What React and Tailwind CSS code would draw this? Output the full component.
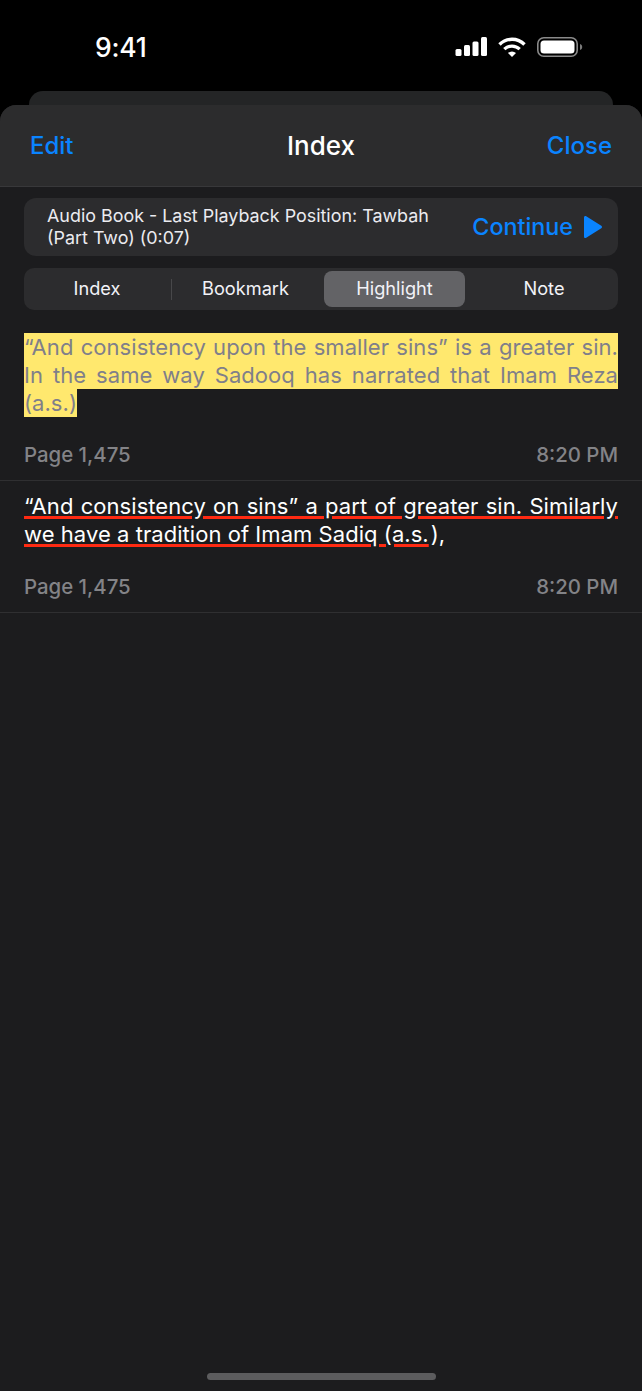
const font = { fontFamily: 'Inter, "Noto Sans", sans-serif' }

function StatusBar() {
  return (
    <div className="h-[91px] flex items-start justify-between pt-[33px] pl-[95px] pr-[59px]">
      <span className="text-white text-[26.500px] leading-[28px] font-medium tracking-[-0.2px]">9:41</span>
      <svg width="128" height="24" viewBox="0 0 128 24" className="mt-[2px]">
        <g fill="#fff">
          <rect x="0.500" y="14" width="6" height="7" rx="1.500" />
          <rect x="9" y="10" width="6" height="11" rx="1.500" />
          <rect x="17.500" y="6.500" width="6" height="14.500" rx="1.500" />
          <rect x="26" y="2" width="6" height="19" rx="1.500" />
        </g>
        <g fill="none" stroke="#fff" strokeLinecap="butt">
          <path d="M44.500 9.500a17.500 17.500 0 0 1 25 0" strokeWidth="3.400" />
          <path d="M49.300 14.200a11 11 0 0 1 15.400 0" strokeWidth="3.200" />
        </g>
        <path d="M53 18a6 6 0 0 1 8 0L57 22z" fill="#fff" />
        <rect x="82.800" y="2.800" width="39.400" height="18.400" rx="6" fill="none" stroke="#8a8a8a" strokeWidth="1.600" />
        <rect x="85.500" y="5.500" width="34" height="13" rx="3.500" fill="#fff" />
        <path d="M125 9c1.400.4 2.200 1.500 2.200 3s-.8 2.600-2.200 3z" fill="#7a7a7a" />
      </svg>
    </div>
  )
}

function Meta() {
  return (
    <div className="flex justify-between text-[20.400px] leading-[24px] font-medium text-[#838387]">
      <span>Page 1,475</span>
      <span>8:20 PM</span>
    </div>
  )
}

export default function App() {
  return (
    <div style={font} className="w-[642px] h-[1391px] bg-black overflow-hidden flex flex-col">
      <StatusBar />
      <div className="mx-[29px] h-[14px] shrink-0 bg-[#242526] rounded-t-[14px]" />

      <div className="flex-1 bg-[#1c1c1e] rounded-t-[16px] flex flex-col relative">
        <div className="h-[82px] bg-[#2c2c2d] rounded-t-[16px] border-b border-[#38383a] flex items-center px-[30px] shrink-0">
          <span className="flex-1 text-[#0a84ff] text-[24px] font-medium">Edit</span>
          <span className="text-white text-[26px] font-medium">Index</span>
          <span className="flex-1 text-right text-[#0a84ff] text-[24px] font-medium">Close</span>
        </div>

        <div className="px-[24px] pt-[11px]">
          <div className="h-[58px] bg-[#2c2c2e] rounded-[12px] flex items-center justify-between pl-[23px] pr-[16px]">
            <div className="w-[400px] text-[#ebebf0] text-[17.900px] leading-[22px]">
              Audio Book - Last Playback Position: Tawbah (Part Two) (0:07)
            </div>
            <div className="flex items-center gap-[11px]">
              <span className="text-[#0a84ff] text-[23.300px] font-medium">Continue</span>
              <svg width="18" height="24" viewBox="0 0 18 24">
                <path d="M0 2.500v19c0 1.300 1.100 2 2.200 1.300L17.300 13.200c.9-.6.900-1.800 0-2.400L2.200 1.200C1.100.5 0 1.200 0 2.500z" fill="#0a84ff" />
              </svg>
            </div>
          </div>

          <div className="mt-[12px] h-[42px] bg-[#2c2c2e] rounded-[10px] flex items-center px-[3px] text-[18.200px] text-[#f2f2f7]">
            <div className="w-[144px] pr-[4px] text-center">Index</div>
            <div className="w-px h-[21px] bg-[#48484a]" />
            <div className="w-[152px] pr-[5px] text-center">Bookmark</div>
            <div className="w-[141px] h-[36px] bg-[#636366] rounded-[8px] flex items-center justify-center">Highlight</div>
            <div className="flex-1 pl-[8px] text-center">Note</div>
          </div>
        </div>

        <div className="px-[24px] pt-[23px] pb-[13px] border-b border-[#2f2f31]">
          <p className="text-[22px] leading-[28px] text-justify text-[#7f7f8a] tracking-[0.05px]">
            <span className="bg-[#ffe86e] py-[1px]">
              “And consistency upon the smaller sins” is a greater sin. In the same way Sadooq has narrated that Imam Reza (a.s.)
            </span>
          </p>
          <div className="mt-[26px]">
            <Meta />
          </div>
        </div>

        <div className="px-[24px] pt-[11px] pb-[13px] border-b border-[#2f2f31]">
          <p className="text-[22px] leading-[28px] text-justify text-white tracking-[0.05px]">
            <span className="underline decoration-[#ff2a12] decoration-[3px] underline-offset-[2px]">
              “And consistency on sins” a part of greater sin. Similarly we have a tradition of Imam Sadiq (a.s.
            </span>
            <span className="ml-[2px]">),</span>
          </p>
          <div className="mt-[27px]">
            <Meta />
          </div>
        </div>

        <div className="absolute left-[207px] bottom-[11px] w-[229px] h-[7px] rounded-full bg-[#5c5c5e]" />
      </div>
    </div>
  )
}
